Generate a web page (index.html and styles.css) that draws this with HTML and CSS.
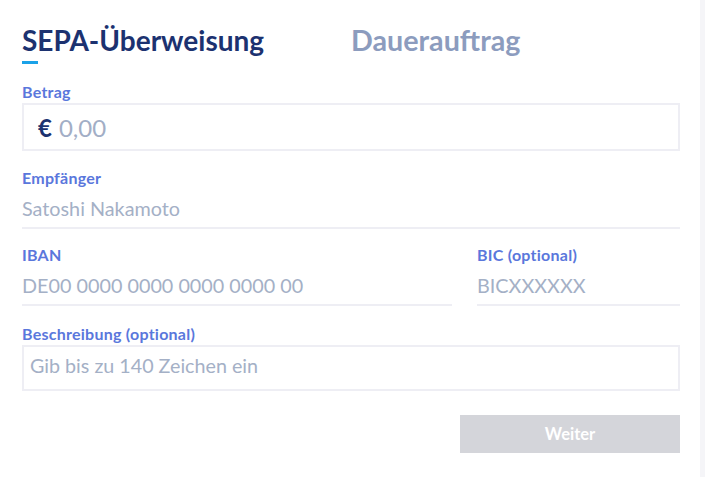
FILE: index.html
```html
<!DOCTYPE html>
<html lang="de">
<head>
    <meta charset="UTF-8">
    <meta name="viewport" content="width=device-width, initial-scale=1.0">
    <title>Überweisung</title>
    <link rel="stylesheet" href="styles.css">
</head>
<body>
    <div class="page">
        <div class="tabs">
            <div class="tab active">SEPA-Überweisung</div>
            <div class="tab">Dauerauftrag</div>
        </div>

        <form class="transfer">
            <label class="label">Betrag</label>
            <div class="amountBox">
                <span class="euro">€</span>
                <span class="amount">0,00</span>
            </div>

            <label class="label">Empfänger</label>
            <div class="line">Satoshi Nakamoto</div>

            <div class="row">
                <div class="col iban">
                    <label class="label">IBAN</label>
                    <div class="line">DE00 0000 0000 0000 0000 00</div>
                </div>
                <div class="col bic">
                    <label class="label">BIC (optional)</label>
                    <div class="line">BICXXXXXX</div>
                </div>
            </div>

            <label class="label">Beschreibung (optional)</label>
            <div class="textBox">Gib bis zu 140 Zeichen ein</div>

            <div class="actions">
                <button type="button" class="nextBtn">Weiter</button>
            </div>
        </form>
    </div>
    <div class="edge"></div>
</body>
</html>
```

FILE: styles.css
```css
body{
    margin: 0;
    background: #fff;
    font-family: Lato, "Open Sans", sans-serif;
}
.page{
    width: 658px;
    padding: 20px 0 0 22px;
}
.tabs{
    display: flex;
    gap: 87px;
    height: 44px;
}
.tab{
    font-size: 28.7px;
    font-weight: 700;
    color: #8c9cbe;
    line-height: 40px;
}
.tab.active{
    font-size: 28px;
    color: #1c3270;
    position: relative;
}
.tab.active::after{
    content: "";
    position: absolute;
    left: 0;
    top: 41px;
    width: 16px;
    height: 3px;
    background: #1ba2e8;
}
.transfer{
    display: flex;
    flex-direction: column;
    padding-top: 18px;
}
.label{
    display: block;
    font-size: 16px;
    font-weight: 700;
    letter-spacing: 0.25px;
    color: #5a77dc;
    line-height: 20px;
}
.amountBox{
    margin-top: 1px;
    height: 44px;
    border: 2px solid #eeeef4;
    display: flex;
    align-items: center;
    padding-left: 14px;
    margin-bottom: 17px;
}
.euro{
    font-size: 24px;
    font-weight: 700;
    color: #1c3270;
    margin-right: 7px;
}
.amount{
    font-size: 24px;
    color: #a2aec6;
}
.line{
    padding: 8px 0 6px;
    border-bottom: 2px solid #eeeef4;
    font-size: 19.8px;
    color: #a4b0c6;
    line-height: 25px;
    margin-bottom: 16px;
}
.row{
    display: flex;
    gap: 25px;
}
.row .line{
    margin-bottom: 18px;
}
.col.iban{
    width: 430px;
}
.col.bic{
    flex: 1;
}
.textBox{
    margin-top: 1px;
    border: 2px solid #eeeef4;
    font-size: 19.7px;
    color: #a4b0c6;
    line-height: 38px;
    padding: 0 0 4px 6px;
}
.actions{
    display: flex;
    justify-content: flex-end;
    margin-top: 24px;
}
.nextBtn{
    width: 220px;
    height: 38px;
    border: none;
    background: #d4d5da;
    color: #fff;
    font-family: Lato, sans-serif;
    font-size: 16.5px;
    font-weight: 700;
}
.edge{
    position: fixed;
    top: 0;
    right: 0;
    width: 5px;
    height: 100%;
    background: #f5f5f8;
}
```
